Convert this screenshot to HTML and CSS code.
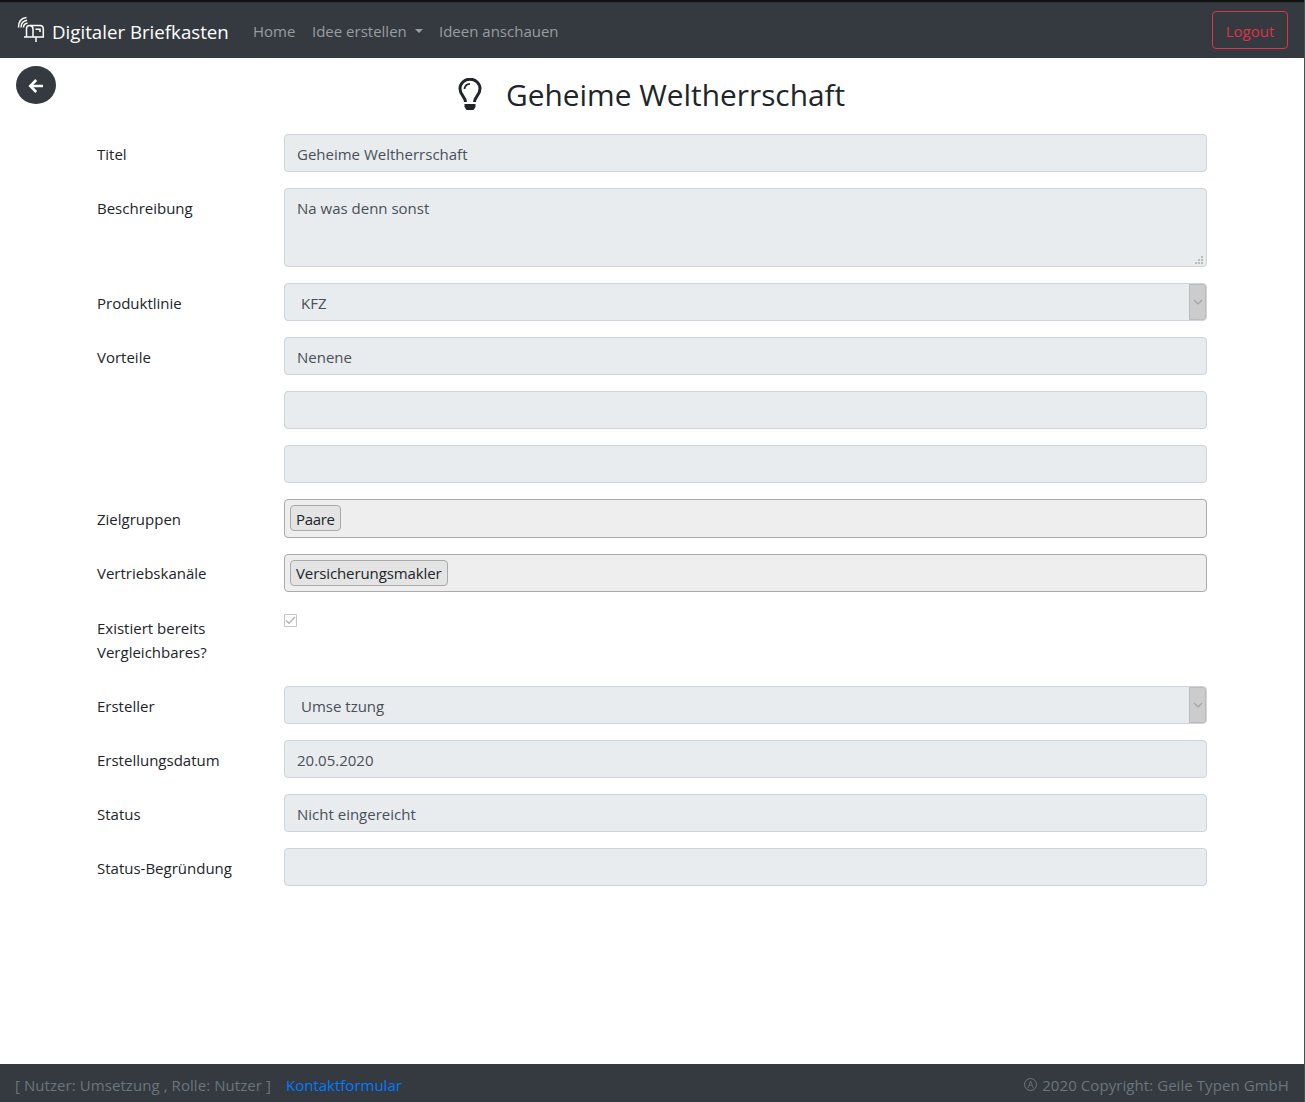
FILE: index.html
```html
<!DOCTYPE html>
<html lang="de">
<head>
<meta charset="utf-8">
<title>Digitaler Briefkasten</title>
<link rel="stylesheet" href="styles.css">
</head>
<body>
<header class="navbar">
  <a class="brand">
    <svg class="logo" viewBox="0 0 28 28" fill="none" stroke="#fff" stroke-width="1.500">
      <path d="M1.500 11.500C1.500 5.500 4.500 2 9.500 1.500M4 11.500C4 7.500 6 5 10 4.300M6.500 11.500C6.500 9 8 7.500 10.500 7" stroke-width="1.500"/>
      <path d="M9.500 21V13Q9.500 9.500 12.500 9.500H23Q26.300 9.500 26.300 13V21H7M16 21V13Q16 10 13 9.500M18.500 13.300H23V16M19 21V26"/>
    </svg>
    <span class="brand-text">Digitaler Briefkasten</span>
  </a>
  <nav class="links">
    <a class="w-home">Home</a>
    <a class="w-create">Idee erstellen<i class="caret"></i></a>
    <a class="w-view">Ideen anschauen</a>
  </nav>
  <button class="logout">Logout</button>
</header>
<main class="content">
  <div class="heading">
    <button class="back" aria-label="Zurück"><svg viewBox="0 0 16 16" fill="none" stroke="#fff" stroke-width="2.600"><path d="M8.200 2L2.300 8L8.200 14M2.300 8H15"/></svg></button>
    <h1 class="title">
      <svg class="bulb" viewBox="0 0 24 32"><path d="M7.500 24C7.500 19 2 17 2 10.800A10 9.600 0 0 1 22 10.800C22 17 16.500 19 16.500 24" fill="none" stroke="#212529" stroke-width="3"/><path d="M6.500 11Q7 6 12 5.800" fill="none" stroke="#212529" stroke-width="1.800"/><path d="M6.500 26H17.500V29L15.500 32H8.500L6.500 29Z" fill="#212529"/></svg>
      <span>Geheime Weltherrschaft</span>
    </h1>
  </div>
  <form class="form">
    <div class="row"><label>Titel</label><div class="field">Geheime Weltherrschaft</div></div>
    <div class="row"><label>Beschreibung</label><div class="field area">Na was denn sonst<svg class="grip" viewBox="0 0 8 8" fill="#bbb"><path d="M6 0h2v2H6zM3 3h2v2H3zM6 3h2v2H6zM0 6h2v2H0zM3 6h2v2H3zM6 6h2v2H6z"/></svg></div></div>
    <div class="row"><label>Produktlinie</label><div class="field select"><span>KFZ</span><i class="arrow"><svg viewBox="0 0 10 6" fill="none" stroke="#a2a2a2" stroke-width="1.200"><path d="M1 1L5 5L9 1"/></svg></i></div></div>
    <div class="row"><label>Vorteile</label><div class="field">Nenene</div></div>
    <div class="row"><label></label><div class="field"></div></div>
    <div class="row"><label></label><div class="field"></div></div>
    <div class="row"><label>Zielgruppen</label><div class="multi tall"><span class="tag">Paare</span></div></div>
    <div class="row channels"><label>Vertriebskanäle</label><div class="multi"><span class="tag">Versicherungsmakler</span></div></div>
    <div class="row existing"><label>Existiert bereits Vergleichbares?</label><div class="check"><svg viewBox="0 0 13 13" fill="none"><path d="M.5.5h12v12H.5z" stroke="#c6c6c6"/><path d="M2 6.500L5 9.300L11 3" stroke="#b5b5b5" stroke-width="1.400"/></svg></div></div>
    <div class="row"><label>Ersteller</label><div class="field select"><span>Umse tzung</span><i class="arrow"><svg viewBox="0 0 10 6" fill="none" stroke="#a2a2a2" stroke-width="1.200"><path d="M1 1L5 5L9 1"/></svg></i></div></div>
    <div class="row"><label>Erstellungsdatum</label><div class="field">20.05.2020</div></div>
    <div class="row"><label>Status</label><div class="field">Nicht eingereicht</div></div>
    <div class="row"><label>Status-Begründung</label><div class="field"></div></div>
  </form>
</main>
<footer class="footer">
  <span class="user">[ Nutzer: Umsetzung , Rolle: Nutzer ]</span>
  <a class="contact">Kontaktformular</a>
  <span class="copy"><span class="circled">A</span> 2020 Copyright: Geile Typen GmbH</span>
</footer>
</body>
</html>
```
FILE: styles.css
```css
* { box-sizing: border-box; }
body { margin: 0; height: 1102px; display: flex; flex-direction: column; font: 15px/24px "Open Sans", "Noto Sans", sans-serif; color: #212529; background: #fff; border-right: 1px solid #4a4c4f; white-space: nowrap; overflow: hidden; }
button { font: inherit; }
.navbar { height: 58px; flex: none; display: flex; align-items: center; padding: 2px 16px 0; background: #343a40; border-top: 2px solid #111; box-shadow: inset 0 1px #2d3136; }
.brand { display: flex; width: 237px; color: #fff; align-items: center; }
.logo { width: 28px; height: 28px; margin: -2px 7px 0 1px; }
.brand-text { font-size: 18.700px; line-height: 30px; margin-top: 1px; }
.links { display: flex; color: #9a9da0; }
.w-home { width: 59px; }
.w-create { width: 127px; }
.caret { display: inline-block; margin-left: 8px; vertical-align: 4px; border: 4.500px solid transparent; border-top-color: currentColor; border-bottom: 0; }
.logout { margin: -3px 0 0 auto; width: 76px; height: 38px; padding: 2px 0 0; border: 1px solid #dc3545; border-radius: 4px; background: none; color: #dc3545; }
.content { flex: 1; }
.heading { display: flex; height: 76px; padding: 8px 16px; }
.back { width: 40px; height: 38px; border: 0; border-radius: 50%; background: #343a40; padding: 2px 0 0; display: flex; align-items: center; justify-content: center; }
.back svg { width: 16px; height: 16px; }
.title { display: flex; margin: 9px 0 0 402px; font-size: 29.850px; font-weight: 400; line-height: 40px; }
.bulb { width: 24px; height: 32px; margin: 3px 24px 0 0; }
.form { display: flex; flex-direction: column; gap: 16px; padding: 0 97px; }
.row { display: flex; align-items: flex-start; }
.row label { width: 187px; padding: 8px 40px 0 0; white-space: normal; }
.channels label { padding-top: 7px; }
.field { position: relative; flex: 1; height: 38px; padding: 7px 12px; border: 1px solid #ced4da; border-radius: 4px; background: #e8ecef; color: #495057; }
.area { height: 79px; }
.grip { position: absolute; right: 3px; bottom: 2px; width: 8px; height: 8px; }
.select { display: flex; padding: 0 0 0 16px; line-height: 38px; }
.arrow { display: flex; align-items: center; justify-content: center; width: 17px; margin-left: auto; background: #ccc; border: 1px solid #bbb; border-radius: 0 3px 3px 0; }
.arrow svg { width: 10px; height: 6px; }
.multi { flex: 1; height: 38px; padding: 5px; background: #eee; border: 1px solid #aaa; border-radius: 4px; }
.tall { height: 39px; }
.tag { display: block; width: max-content; height: 26px; padding: 1px 5px 0; border: 1px solid #aaa; border-radius: 4px; background: #e4e4e4; letter-spacing: -.1px; }
.tall .tag { letter-spacing: -.3px; }
.channels .tag { padding-top: 0; }
.existing { height: 62px; }
.check { padding-top: 6px; }
.check svg { display: block; width: 13px; height: 13px; }
.footer { flex: none; height: 38px; display: flex; padding: 9px 15px 0; background: #343a40; color: #6c757d; }
.user { width: 271px; letter-spacing: .07px; }
.contact { color: #007bff; }
.copy { margin-left: auto; display: flex; gap: 5px; letter-spacing: .07px; }
.circled { width: 13px; height: 13px; margin-top: 5px; border: 1px solid; border-radius: 50%; font-size: 9px; line-height: 11px; text-align: center; }
```
